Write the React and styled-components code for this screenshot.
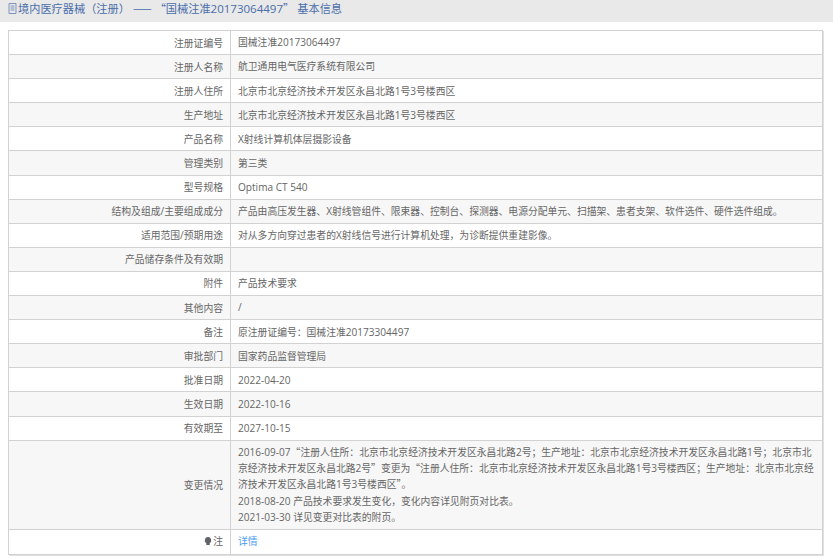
import React from 'react';
import styled, {createGlobalStyle} from 'styled-components';

const GlobalStyle = createGlobalStyle`
    html, body {
        margin: 0;
        padding: 0;
        background: #fff;
    }
    body {
        font-family: "Noto Sans CJK SC", sans-serif;
        font-size: 9.8px;
        color: #666;
    }
`

const Page = styled.div`
    width: 833px;
    height: 559px;
    overflow: hidden;
`

const TitleBar = styled.div`
    display: flex;
    align-items: center;
    gap: 1px;
    height: 22px;
    padding: 0 0 6px 8px;
    box-sizing: border-box;
    background: #e9e9e9;
    color: #4a6ea9;
    font-size: 11.2px;
    white-space: pre;
`

const DocIcon = styled.svg`
    width: 9px;
    height: 11px;
    flex: none;
`

const Latin = styled.span`
    font-family: "Open Sans", sans-serif;
    font-size: 1.03em;
`

const Table = styled.table`
    width: 815px;
    margin: 8px 0 0 8px;
    border-collapse: collapse;
    table-layout: fixed;
    box-shadow: 1px 1px 0 #e0e0e4;
`

const Row = styled.tr`
    height: ${props => props.$height || 24.1}px;

    &:nth-child(even) {
        background: #f7f7f7;
    }

    &:last-child td {
        padding-bottom: 2px;
    }
`

const Label = styled.td`
    width: 214px;
    padding: 0 7px 0 0;
    border: 1px solid #d2d2d2;
    text-align: right;
    vertical-align: middle;
`

const Value = styled.td`
    padding: 1px 7px;
    border: 1px solid #d2d2d2;
    line-height: 16.3px;
    vertical-align: middle;
`

const BulbIcon = styled.svg`
    width: 8px;
    height: 8px;
    margin-right: 1px;
    vertical-align: 0;
`

const DetailLink = styled.a`
    color: #4b9bf5;
    text-decoration: none;
`

// ascii runs use the latin font, the rest stays on the CJK one
const Mixed = ({text}) => text.split(/([\x20-\x7e]+)/).map((part, i) => (
    i % 2 ? <Latin key={i}>{part}</Latin> : part
))

const rows = [
    ['注册证编号', '国械注准20173064497'],
    ['注册人名称', '航卫通用电气医疗系统有限公司'],
    ['注册人住所', '北京市北京经济技术开发区永昌北路1号3号楼西区'],
    ['生产地址', '北京市北京经济技术开发区永昌北路1号3号楼西区'],
    ['产品名称', 'X射线计算机体层摄影设备'],
    ['管理类别', '第三类'],
    ['型号规格', 'Optima CT 540'],
    ['结构及组成/主要组成成分', '产品由高压发生器、X射线管组件、限束器、控制台、探测器、电源分配单元、扫描架、患者支架、软件选件、硬件选件组成。'],
    ['适用范围/预期用途', '对从多方向穿过患者的X射线信号进行计算机处理，为诊断提供重建影像。'],
    ['产品储存条件及有效期', ''],
    ['附件', '产品技术要求'],
    ['其他内容', '/'],
    ['备注', '原注册证编号：国械注准20173304497'],
    ['审批部门', '国家药品监督管理局'],
    ['批准日期', '2022-04-20'],
    ['生效日期', '2022-10-16'],
    ['有效期至', '2027-10-15'],
]

const changes = [
    '2016-09-07“注册人住所：北京市北京经济技术开发区永昌北路2号；生产地址：北京市北京经济技术开发区永昌北路1号；北京市北京经济技术开发区永昌北路2号”变更为“注册人住所：北京市北京经济技术开发区永昌北路1号3号楼西区；生产地址：北京市北京经济技术开发区永昌北路1号3号楼西区”。',
    '2018-08-20 产品技术要求发生变化，变化内容详见附页对比表。',
    '2021-03-30 详见变更对比表的附页。',
]

const App = () => (
    <Page>
        <GlobalStyle/>
        <TitleBar>
            <DocIcon viewBox="0 0 9 11">
                <path d="M1 .5h7v10H1z M2.5 3h4 M2.5 5h4 M2.5 7h4" fill="none" stroke="#7d93bd" strokeWidth="1"/>
            </DocIcon>
            <span><Mixed text="境内医疗器械（注册） —— “国械注准20173064497” 基本信息"/></span>
        </TitleBar>
        <Table>
            <tbody>
                {rows.map(([label, value]) => (
                    <Row key={label}>
                        <Label><Mixed text={label}/></Label>
                        <Value><Mixed text={value}/></Value>
                    </Row>
                ))}
                <Row $height={89}>
                    <Label>变更情况</Label>
                    <Value>
                        {changes.map(line => <div key={line}><Mixed text={line}/></div>)}
                    </Value>
                </Row>
                <Row $height={25}>
                    <Label>
                        <BulbIcon viewBox="0 0 8 8">
                            <path d="M4 0a3.3 3.3 0 0 1 1.7 6.1V8H2.3V6.1A3.3 3.3 0 0 1 4 0z" fill="#5f6368"/>
                        </BulbIcon>
                        注
                    </Label>
                    <Value>
                        <DetailLink href="#">详情</DetailLink>
                    </Value>
                </Row>
            </tbody>
        </Table>
    </Page>
)

export default App;
